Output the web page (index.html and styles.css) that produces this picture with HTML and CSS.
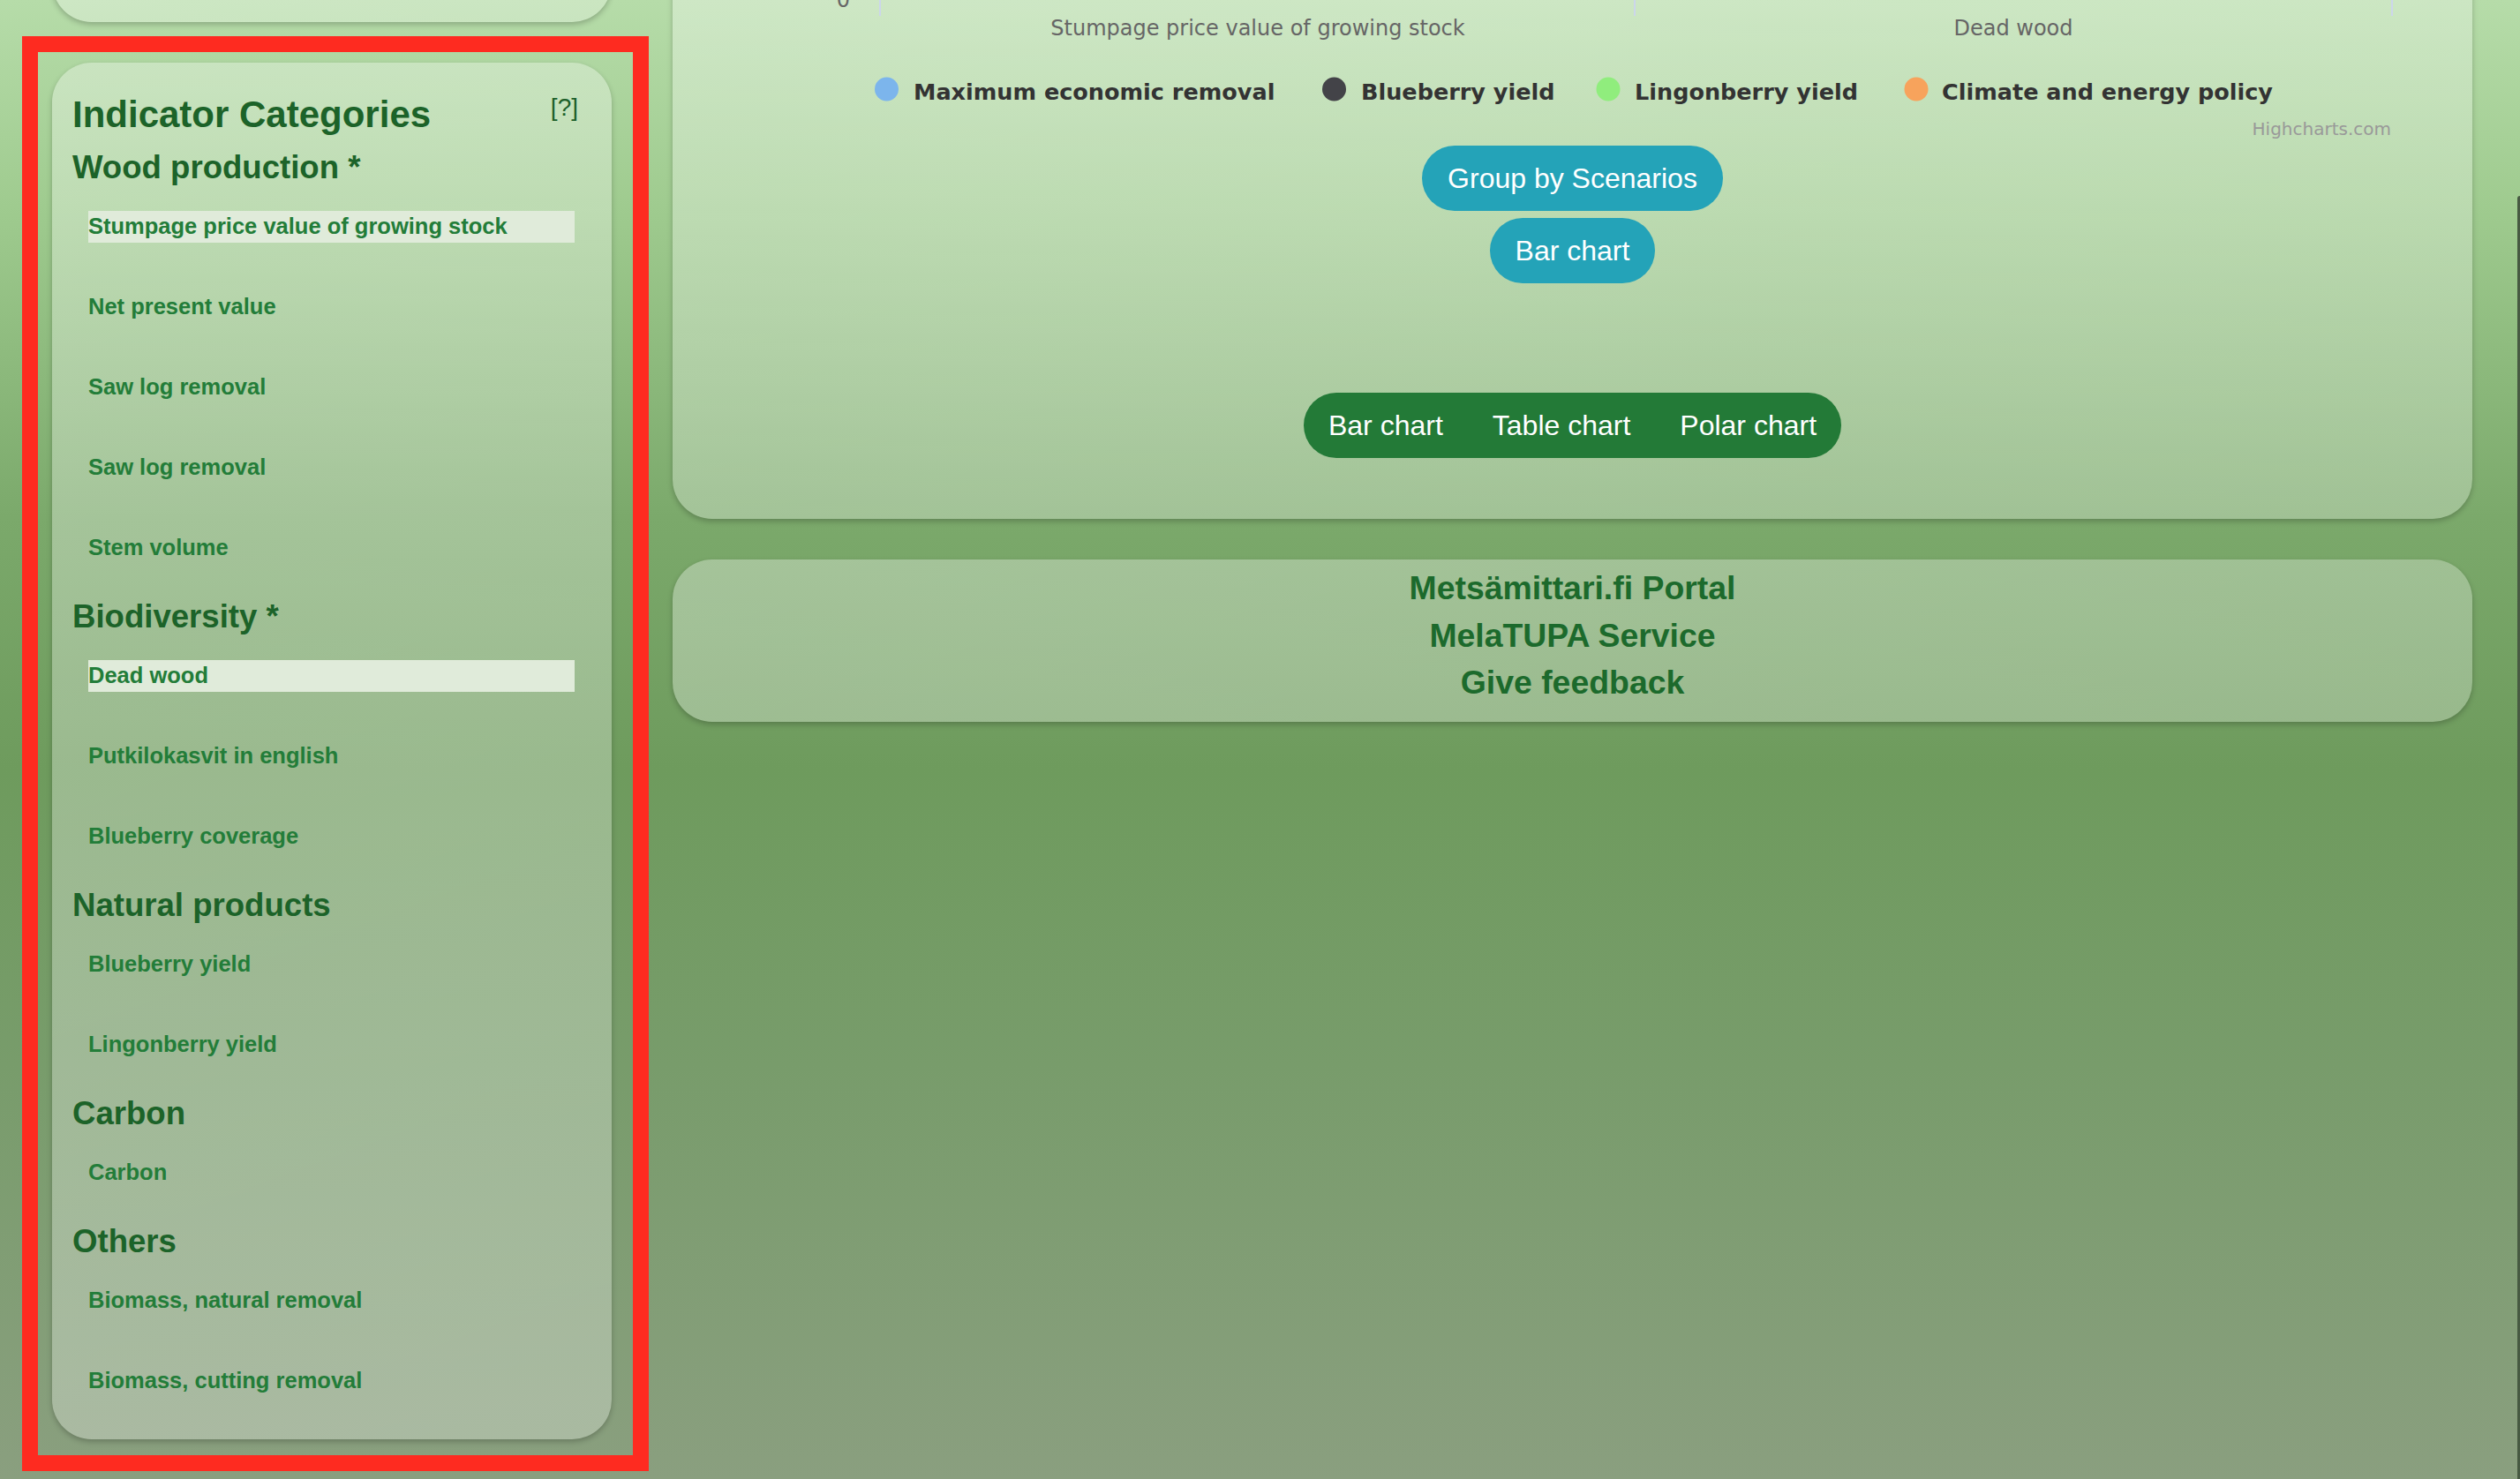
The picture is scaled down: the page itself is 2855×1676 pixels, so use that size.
FILE: index.html
```html
<!DOCTYPE html>
<html lang="en">
<head>
<meta charset="utf-8">
<title>Metsämittari – Indicators</title>
<link rel="stylesheet" href="styles.css">
</head>
<body>
<div class="layout">
  <aside class="sidebar">
    <div class="card card-top"></div>
    <div class="card categories">
      <div class="cat-header">
        <h2 class="cat-title">Indicator Categories</h2>
        <span class="help">[?]</span>
      </div>
      <section class="group">
        <h3 class="group-title">Wood production *</h3>
        <ul class="items">
          <li class="item selected">Stumpage price value of growing stock</li>
          <li class="item">Net present value</li>
          <li class="item">Saw log removal</li>
          <li class="item">Saw log removal</li>
          <li class="item">Stem volume</li>
        </ul>
      </section>
      <section class="group">
        <h3 class="group-title">Biodiversity *</h3>
        <ul class="items">
          <li class="item selected">Dead wood</li>
          <li class="item">Putkilokasvit in english</li>
          <li class="item">Blueberry coverage</li>
        </ul>
      </section>
      <section class="group">
        <h3 class="group-title">Natural products</h3>
        <ul class="items">
          <li class="item">Blueberry yield</li>
          <li class="item">Lingonberry yield</li>
        </ul>
      </section>
      <section class="group">
        <h3 class="group-title">Carbon</h3>
        <ul class="items">
          <li class="item">Carbon</li>
        </ul>
      </section>
      <section class="group">
        <h3 class="group-title">Others</h3>
        <ul class="items">
          <li class="item">Biomass, natural removal</li>
          <li class="item">Biomass, cutting removal</li>
        </ul>
      </section>
    </div>
  </aside>

  <main class="content">
    <div class="card chart-card">
      <svg class="chart" width="2039" height="265" viewBox="0 0 2039 265" xmlns="http://www.w3.org/2000/svg">
        <g class="ticks">
          <line x1="235" y1="0" x2="235" y2="118"/>
          <line x1="1090" y1="0" x2="1090" y2="118"/>
          <line x1="1948" y1="0" x2="1948" y2="118"/>
        </g>
        <text class="axis-label" x="201" y="108" text-anchor="end">0</text>
        <text class="axis-label" x="663" y="140" text-anchor="middle">Stumpage price value of growing stock</text>
        <text class="axis-label" x="1519" y="140" text-anchor="middle">Dead wood</text>
        <g class="legend">
          <circle cx="242.5" cy="201" r="13.5" fill="#7cb5ec"/>
          <text x="273" y="213">Maximum economic removal</text>
          <circle cx="749.5" cy="201" r="13.5" fill="#434348"/>
          <text x="780" y="213">Blueberry yield</text>
          <circle cx="1060" cy="201" r="13.5" fill="#90ed7d"/>
          <text x="1090" y="213">Lingonberry yield</text>
          <circle cx="1409" cy="201" r="13.5" fill="#f7a35c"/>
          <text x="1438" y="213">Climate and energy policy</text>
        </g>
        <text class="credits" x="1947" y="253" text-anchor="end">Highcharts.com</text>
      </svg>
      <div class="chart-actions">
        <button class="btn-info">Group by Scenarios</button>
        <button class="btn-info">Bar chart</button>
      </div>
      <div class="chart-switch">
        <button>Bar chart</button>
        <button>Table chart</button>
        <button>Polar chart</button>
      </div>
    </div>
    <nav class="card links">
      <a href="#">Metsämittari.fi Portal</a>
      <a href="#">MelaTUPA Service</a>
      <a href="#">Give feedback</a>
    </nav>
  </main>
</div>
<div class="annotation"></div>
<div class="edge-tab"></div>
</body>
</html>
```

FILE: styles.css
```css
html {
  height: 100%;
  background-color: #8a9f7f;
  background-image: linear-gradient(180deg, #b6dca9 0%, #9fcb8f 14%, #7ba96b 35%, #6e9b5d 52%, #789c6b 72%, #8a9f7f 100%);
  background-repeat: no-repeat;
}

body {
  margin: 0;
  min-height: 100%;
  font-family: "Liberation Sans", Arial, sans-serif;
  overflow: hidden;
}

.layout {
  display: grid;
  grid-template-columns: 634px 2039px;
  column-gap: 69px;
  padding-left: 59px;
  margin-top: -100px;
  align-items: start;
}

.card {
  background: linear-gradient(160deg, rgba(255, 255, 255, 0.33), rgba(255, 255, 255, 0.28));
  border-radius: 45px;
  box-shadow: 0 3px 6px rgba(0, 0, 0, 0.22);
}

.sidebar {
  display: flex;
  flex-direction: column;
  gap: 46px;
}

.card-top {
  height: 125px;
}

.categories {
  display: flex;
  flex-direction: column;
  padding: 35px 38px 48px 23px;
}

.cat-header {
  display: flex;
  justify-content: space-between;
  align-items: flex-start;
  margin-bottom: 14px;
}

.cat-title {
  margin: 0;
  font-size: 42px;
  line-height: 48px;
  font-weight: 700;
  color: #1c6329;
}

.help {
  font-size: 28px;
  line-height: 32px;
  color: #1c5f2a;
  margin-top: 0;
}

.group + .group {
  margin-top: 38px;
}

.group-title {
  margin: 0;
  font-size: 36.6px;
  line-height: 43px;
  font-weight: 700;
  color: #1c6329;
}

.items {
  list-style: none;
  margin: 28px 0 0 18px;
  padding: 0;
  display: flex;
  flex-direction: column;
  gap: 55px;
}

.item {
  width: 551px;
  height: 36px;
  line-height: 34px;
  font-size: 25.5px;
  font-weight: 700;
  color: #237d39;
  white-space: nowrap;
}

.item.selected {
  background: #e0ebda;
}

.content {
  display: flex;
  flex-direction: column;
  gap: 46px;
}

.chart-card {
  height: 688px;
  box-sizing: border-box;
  display: flex;
  flex-direction: column;
  align-items: center;
}

.chart {
  display: block;
  flex: none;
}

.chart .ticks line {
  stroke: #ccd6eb;
  stroke-width: 2;
}

.chart text {
  font-family: "DejaVu Sans", Verdana, sans-serif;
}

.axis-label {
  font-size: 24px;
  fill: #666666;
}

.legend text {
  font-size: 25.5px;
  font-weight: 700;
  fill: #333333;
}

.credits {
  font-size: 20px;
  fill: #999999;
}

.chart-actions {
  display: flex;
  flex-direction: column;
  align-items: center;
  gap: 8px;
}

.btn-info,
.chart-switch button {
  font-family: "Liberation Sans", Arial, sans-serif;
  font-size: 32px;
  color: #ffffff;
  border: 0;
  height: 74px;
  line-height: 74px;
  padding: 0 29px;
  margin: 0;
  cursor: pointer;
}

.btn-info {
  background: #24a3b8;
  border-radius: 37px;
}

.chart-switch {
  margin-top: 124px;
  display: flex;
  background: #237a37;
  border-radius: 37px;
  overflow: hidden;
}

.chart-switch button {
  background: transparent;
  padding: 0 28px;
}

.links {
  height: 184px;
  box-sizing: border-box;
  padding-top: 6px;
  display: flex;
  flex-direction: column;
  align-items: center;
}

.links a {
  display: block;
  font-size: 37.4px;
  line-height: 53.5px;
  font-weight: 700;
  color: #1c6a2c;
  text-decoration: none;
}

.annotation {
  position: absolute;
  left: 25px;
  top: 41px;
  width: 710px;
  height: 1626px;
  box-sizing: border-box;
  border: 18px solid #fe2b20;
  pointer-events: none;
}

.edge-tab {
  position: fixed;
  top: 222px;
  right: 0;
  bottom: 0;
  width: 3px;
  background: #475a42;
  border-top-left-radius: 4px;
}
```
